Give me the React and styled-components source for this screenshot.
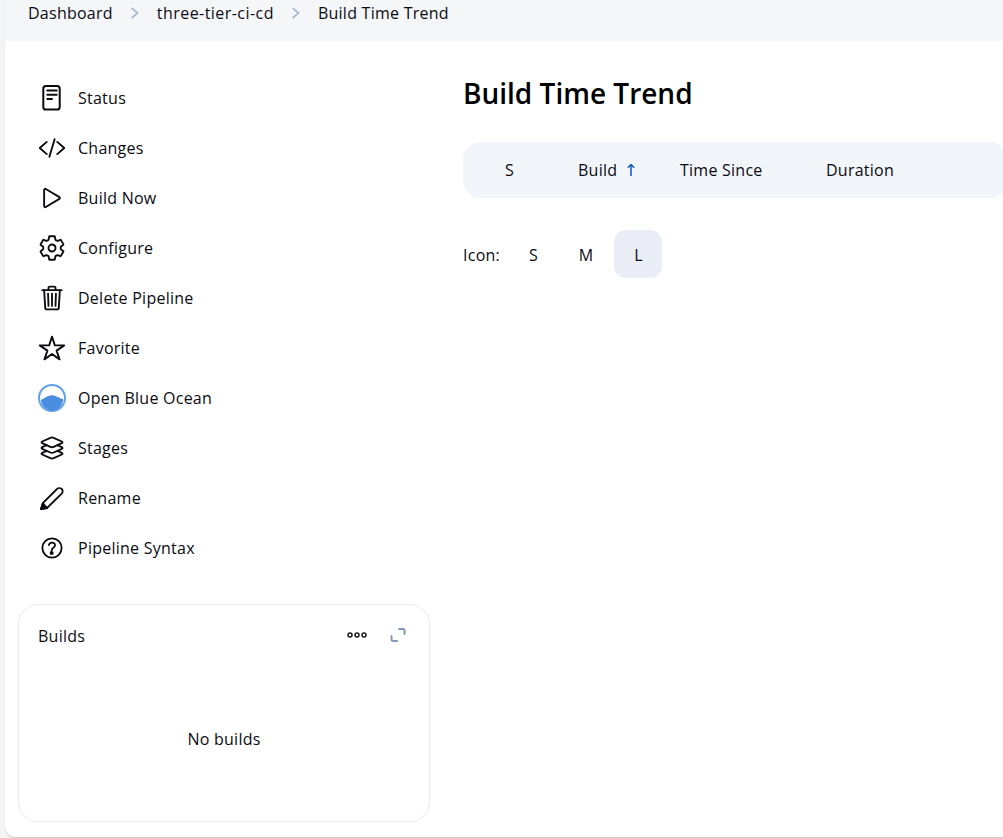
import React from 'react';
import styled, { createGlobalStyle } from 'styled-components';
import {
  IoCodeSlashOutline,
  IoPlayOutline,
  IoSettingsOutline,
  IoTrashOutline,
  IoStarOutline,
  IoLayersOutline,
  IoHelpCircleOutline,
} from 'react-icons/io5';

const GlobalStyle = createGlobalStyle`
  html, body {
    margin: 0;
    padding: 0;
    background: #f4f4f4;
    overflow: hidden;
  }
  body {
    font-family: "Open Sans", "Noto Sans", "Liberation Sans", sans-serif;
    letter-spacing: 0.25px;
    color: #0b0b12;
  }
`;

const Page = styled.div`
  width: 1003px;
  height: 838px;
  padding-left: 5px;
  box-sizing: border-box;
  overflow: hidden;
`;

const Panel = styled.div`
  width: 998px;
  height: 837px;
  background: #fff;
  border-bottom-left-radius: 10px;
  box-shadow: 0 1px 1px rgba(0, 0, 0, 0.18);
  overflow: hidden;
`;

const Breadcrumbs = styled.nav`
  height: 41px;
  box-sizing: border-box;
  background: #f5f6f8;
  display: flex;
  align-items: flex-start;
  padding: 2px 0 0 23px;
  font-size: 16px;
  line-height: 22px;
`;

const Crumb = styled.span`
  white-space: nowrap;
  letter-spacing: ${(p) => p.$spacing || 0.25}px;
`;

const Chevron = styled.svg`
  width: 12px;
  height: 12px;
  margin: 5px 16px 0;
  flex: none;
`;

const Content = styled.div`
  display: flex;
  align-items: flex-start;
`;

const Sidebar = styled.aside`
  width: 425px;
  flex: none;
  box-sizing: border-box;
  padding: 32px 0 0 13px;
`;

const TaskList = styled.ul`
  list-style: none;
  margin: 0;
  padding: 0;
`;

const Task = styled.li`
  height: 50px;
  display: flex;
  align-items: center;
  font-size: 16px;
`;

const TaskIcon = styled.span`
  width: 60px;
  padding-left: 20px;
  box-sizing: border-box;
  height: 30px;
  flex: none;
  display: flex;
  align-items: center;
  font-size: 28px;
  svg {
    display: block;
  }
  svg.ion * {
    stroke-width: 34px;
  }
`;

const BuildsCard = styled.section`
  width: 412px;
  height: 218px;
  box-sizing: border-box;
  margin-top: 31px;
  border: 1px solid #e8ebf3;
  border-radius: 20px;
  padding: 19px 23px 0 19px;
  display: flex;
  flex-direction: column;
`;

const CardHeader = styled.div`
  display: flex;
  align-items: center;
  height: 24px;
  font-size: 16px;
`;

const CardTitle = styled.span`
  flex: 1;
`;

const CardActions = styled.div`
  display: flex;
  align-items: center;
  gap: 22px;
  margin-top: -2px;
`;

const EmptyText = styled.div`
  text-align: center;
  font-size: 16px;
  margin-top: 80px;
  padding-left: 4px;
`;

const Main = styled.main`
  flex: 1;
  min-width: 0;
  padding: 32px 0 0 33px;
`;

const Title = styled.h1`
  margin: 0;
  font-size: 28px;
  line-height: 40px;
  font-weight: 600;
  letter-spacing: 0;
  color: #000;
`;

const TableHead = styled.div`
  margin-top: 29px;
  width: 545px;
  height: 56px;
  background: #f2f5f9;
  border-radius: 18px;
  display: grid;
  grid-template-columns: 115px 102px 146px 1fr;
  align-items: center;
  font-size: 16px;
`;

const HeadCell = styled.div`
  padding-left: ${(p) => p.$pad || 0}px;
  display: flex;
  align-items: center;
  gap: 9px;
  white-space: nowrap;
`;

const IconSizes = styled.div`
  margin-top: 32px;
  display: flex;
  align-items: flex-start;
  gap: 4.5px;
  font-size: 16px;
  line-height: 50px;
`;

const SizeLabel = styled.span`
  width: 41px;
`;

const SizeButton = styled.span`
  width: 48px;
  height: 48px;
  box-sizing: border-box;
  padding: 2px 0 0 2px;
  border-radius: 12px;
  display: flex;
  align-items: center;
  justify-content: center;
  background: ${(p) => (p.$active ? '#eaedf5' : 'transparent')};
`;

function StatusIcon() {
  return (
    <svg width="28" height="28" viewBox="0 0 28 28" fill="none" stroke="#0b0b12" strokeWidth="2" strokeLinecap="round" strokeLinejoin="round">
      <rect x="5.300" y="2" width="16.400" height="23.500" rx="2.600" />
      <path d="M9.300 6.500h9.400M9.300 10.700h9.400M9.300 15h4.700" />
    </svg>
  );
}

function OceanIcon() {
  return (
    <svg width="28" height="28" viewBox="0 0 28 28">
      <circle cx="14" cy="14" r="13" fill="#fff" stroke="#62a0ec" strokeWidth="2" />
      <path d="M3 15.800C6.500 14.800 9 11.500 13.500 11.300C18 11.200 21 14.500 25 15A11 11 0 0 1 3 15.800z" fill="#4a8de0" />
    </svg>
  );
}

function RenameIcon() {
  return (
    <svg width="28" height="28" viewBox="0 0 28 28" fill="none" stroke="#0b0b12" strokeWidth="1.800" strokeLinejoin="round">
      <path d="M3 25l1.800-5.800L19 5a3.300 3.300 0 0 1 4.700 4.700L9 24z" />
      <path d="M3 25l1.800-5.800L9 24z" fill="#0b0b12" />
    </svg>
  );
}

function MoreIcon() {
  return (
    <svg width="22" height="8" viewBox="0 0 22 8" fill="none" stroke="#1a1a22" strokeWidth="1.500">
      <circle cx="4" cy="4" r="2" />
      <circle cx="11" cy="4" r="2" />
      <circle cx="18" cy="4" r="2" />
    </svg>
  );
}

function ExpandIcon() {
  return (
    <svg width="16" height="16" viewBox="0 0 16 16" fill="none" stroke="#7f98c0" strokeWidth="2" strokeLinecap="round" strokeLinejoin="round">
      <path d="M9 2h4a1.500 1.500 0 0 1 1.500 1.500V7" />
      <path d="M7 14H3a1.500 1.500 0 0 1-1.500-1.500V9" />
    </svg>
  );
}

function SortArrow() {
  return (
    <svg width="10" height="14" viewBox="0 0 10 14" fill="none" stroke="#1554c0" strokeWidth="1.500" strokeLinejoin="round">
      <path d="M5 13V1.500M1.800 4.700 5 1.500l3.200 3.200" />
    </svg>
  );
}

function CrumbChevron() {
  return (
    <Chevron viewBox="0 0 12 12" fill="none" stroke="#a9b9d0" strokeWidth="1.700">
      <path d="M2.500 .8 8.500 6l-6 5.200" />
    </Chevron>
  );
}

const tasks = [
  { label: 'Status', icon: <StatusIcon /> },
  { label: 'Changes', icon: <IoCodeSlashOutline className="ion" /> },
  { label: 'Build Now', icon: <IoPlayOutline className="ion" /> },
  { label: 'Configure', icon: <IoSettingsOutline className="ion" /> },
  { label: 'Delete Pipeline', icon: <IoTrashOutline className="ion" /> },
  { label: 'Favorite', icon: <IoStarOutline className="ion" /> },
  { label: 'Open Blue Ocean', icon: <OceanIcon /> },
  { label: 'Stages', icon: <IoLayersOutline className="ion" /> },
  { label: 'Rename', icon: <RenameIcon /> },
  { label: 'Pipeline Syntax', icon: <IoHelpCircleOutline className="ion" /> },
];

function App() {
  return (
    <Page>
      <GlobalStyle />
      <Panel>
        <Breadcrumbs>
          <Crumb>Dashboard</Crumb>
          <CrumbChevron />
          <Crumb $spacing={0.45}>three-tier-ci-cd</Crumb>
          <CrumbChevron />
          <Crumb>Build Time Trend</Crumb>
        </Breadcrumbs>
        <Content>
          <Sidebar>
            <TaskList>
              {tasks.map((t) => (
                <Task key={t.label}>
                  <TaskIcon>{t.icon}</TaskIcon>
                  {t.label}
                </Task>
              ))}
            </TaskList>
            <BuildsCard>
              <CardHeader>
                <CardTitle>Builds</CardTitle>
                <CardActions>
                  <MoreIcon />
                  <ExpandIcon />
                </CardActions>
              </CardHeader>
              <EmptyText>No builds</EmptyText>
            </BuildsCard>
          </Sidebar>
          <Main>
            <Title>Build Time Trend</Title>
            <TableHead>
              <HeadCell $pad={42}>S</HeadCell>
              <HeadCell>Build <SortArrow /></HeadCell>
              <HeadCell>Time Since</HeadCell>
              <HeadCell>Duration</HeadCell>
            </TableHead>
            <IconSizes>
              <SizeLabel>Icon:</SizeLabel>
              <SizeButton>S</SizeButton>
              <SizeButton>M</SizeButton>
              <SizeButton $active>L</SizeButton>
            </IconSizes>
          </Main>
        </Content>
      </Panel>
    </Page>
  );
}

export default App;
